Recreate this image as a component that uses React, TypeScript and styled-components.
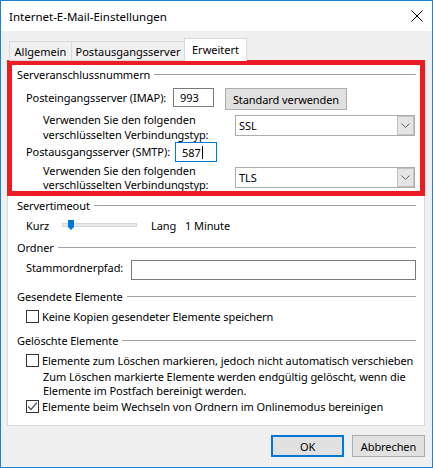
import React from 'react';
import styled, { createGlobalStyle } from 'styled-components';

const FONT = `"Noto Sans", "Open Sans", sans-serif`;

const Global = createGlobalStyle`
  html, body { margin: 0; padding: 0; background: #ffffff; }
  body { font-family: ${FONT}; font-size: 11px; color: #000; }
  * { box-sizing: border-box; }
`;

const Window = styled.div`
  width: 433px;
  height: 468px;
  border: 1px solid #1883d7;
  background: #f0f0f0;
  display: flex;
  flex-direction: column;
  font-family: ${FONT};
  font-size: 11px;
  letter-spacing: -0.08px;
  color: #000;
`;

const TitleBar = styled.div`
  height: 30px;
  background: #ffffff;
  display: flex;
  align-items: center;
  justify-content: space-between;
  padding: 0 9px 0 8px;
  font-size: 11.5px;
  letter-spacing: 0;
`;

const Body = styled.div`
  flex: 1;
  display: flex;
  flex-direction: column;
  padding: 7px 7px 0 6px;
`;

const TabRow = styled.div`
  display: flex;
  align-items: flex-end;
  height: 23px;
  padding-left: 2px;
  margin-bottom: -1px;
  position: relative;
  z-index: 1;
`;

const Tab = styled.div<{ $w: number; $active?: boolean }>`
  width: ${(p) => p.$w}px;
  height: ${(p) => (p.$active ? 23 : 20)}px;
  margin-left: -1px;
  &:first-child { margin-left: 0; }
  border: 1px solid #d9d9d9;
  border-bottom: ${(p) => (p.$active ? 'none' : '1px solid #d9d9d9')};
  background: ${(p) => (p.$active ? '#ffffff' : '#f0f0f0')};
  display: flex;
  align-items: center;
  justify-content: center;
  padding-bottom: ${(p) => (p.$active ? 2 : 0)}px;
  white-space: nowrap;
  letter-spacing: 0;
`;

const Panel = styled.div`
  position: relative;
  background: #ffffff;
  border: 1px solid #d9d9d9;
  display: flex;
  flex-direction: column;
  padding: 5px 8px 11px 9px;
`;

const RedFrame = styled.div`
  position: absolute;
  top: -1px;
  left: -1px;
  width: 418px;
  height: 136px;
  border: 5px solid #ed1c24;
  pointer-events: none;
`;

const GroupHeader = styled.div<{ $mt?: number }>`
  display: flex;
  align-items: center;
  height: 16px;
  margin-top: ${(p) => p.$mt ?? 0}px;
  white-space: nowrap;
  &::after {
    content: '';
    flex: 1;
    height: 0;
    border-top: 1px solid #a0a0a0;
    margin-left: 4px;
  }
`;

const Row = styled.div<{ $mt?: number; $indent?: number }>`
  display: flex;
  align-items: flex-start;
  margin-top: ${(p) => p.$mt ?? 0}px;
  padding-left: ${(p) => p.$indent ?? 9}px;
`;

const Label = styled.div<{ $w?: number; $lh?: number; $ml?: number }>`
  ${(p) => (p.$w ? `width: ${p.$w}px; flex: none;` : '')}
  margin-left: ${(p) => p.$ml ?? 0}px;
  line-height: ${(p) => p.$lh ?? 16}px;
  white-space: nowrap;
`;

const TextBox = styled.div<{ $w?: number; $h: number; $focus?: boolean; $grow?: boolean }>`
  ${(p) => (p.$grow ? 'flex: 1;' : `width: ${p.$w}px;`)}
  height: ${(p) => p.$h}px;
  border: 1px solid ${(p) => (p.$focus ? '#0078d7' : '#7a7a7a')};
  background: #fff;
  display: flex;
  align-items: center;
  padding-left: 6px;
  flex-shrink: 0;
`;

const Caret = styled.span`
  display: inline-block;
  width: 1px;
  height: 13px;
  background: #000;
  margin-left: 1px;
`;

const PushButton = styled.div<{ $w: number; $default?: boolean; $ml?: number }>`
  width: ${(p) => p.$w}px;
  height: 22px;
  margin-left: ${(p) => p.$ml ?? 0}px;
  background: #e1e1e1;
  border: ${(p) => (p.$default ? '2px solid #0078d7' : '1px solid #adadad')};
  display: flex;
  align-items: center;
  justify-content: center;
  flex-shrink: 0;
`;

const Select = styled.div<{ $mt?: number }>`
  width: 180px;
  height: 21px;
  margin-top: ${(p) => p.$mt ?? 0}px;
  border: 1px solid #acacac;
  background: #fff;
  display: flex;
  align-items: stretch;
  flex-shrink: 0;
`;

const SelectValue = styled.div`
  flex: 1;
  display: flex;
  align-items: center;
  padding-left: 3px;
`;

const SelectArrow = styled.div`
  width: 17px;
  background: #e5e5e5;
  border: 1px solid #c2c2c2;
  display: flex;
  align-items: center;
  justify-content: center;
`;

const SliderWrap = styled.div`
  display: flex;
  align-items: center;
  height: 16px;
`;

const Track = styled.div`
  position: relative;
  width: 75px;
  height: 4px;
  background: #e7eaea;
  border: 1px solid #d6d6d6;
  margin-top: -3px;
`;

const Thumb = styled.svg`
  position: absolute;
  left: 5px;
  top: -4px;
`;

const CheckRow = styled.div<{ $mt?: number }>`
  display: flex;
  align-items: center;
  height: 16px;
  margin-top: ${(p) => p.$mt ?? 0}px;
  padding-left: 9px;
  white-space: nowrap;
`;

const Box = styled.div`
  width: 13px;
  height: 13px;
  border: 1px solid #333333;
  background: #fff;
  margin-right: 3px;
  display: flex;
  align-items: center;
  justify-content: center;
  flex-shrink: 0;
`;

const Description = styled.div`
  margin-top: 2px;
  padding-left: 26px;
  line-height: 14px;
`;

const Footer = styled.div`
  display: flex;
  justify-content: flex-end;
  gap: 8px;
  padding-top: 9px;
`;

const Chevron = () => (
  <svg width="9" height="5" viewBox="0 0 9 5">
    <path d="M0.5 0.5 L4.5 4.5 L8.5 0.5" fill="none" stroke="#606060" strokeWidth="1" />
  </svg>
);

const Check = ({ checked }: { checked?: boolean }) => (
  <Box>
    {checked && (
      <svg width="11" height="11" viewBox="0 0 11 11">
        <path d="M1 5.5 L4 8.5 L10 1.5" fill="none" stroke="#555" strokeWidth="1.2" />
      </svg>
    )}
  </Box>
);

const SelectRow = ({ value, mt, lh }: { value: string; mt: number; lh: number }) => (
  <Row $mt={mt} $indent={26}>
    <Label $w={192} $lh={lh}>
      Verwenden Sie den folgenden
      <br />
      verschlüsselten Verbindungstyp:
    </Label>
    <Select $mt={3}>
      <SelectValue>{value}</SelectValue>
      <SelectArrow>
        <Chevron />
      </SelectArrow>
    </Select>
  </Row>
);

export default function App() {
  return (
    <>
      <Global />
      <Window>
        <TitleBar>
          <span>Internet-E-Mail-Einstellungen</span>
          <svg width="12" height="12" viewBox="0 0 12 12">
            <path d="M0.5 0.5 L11.5 11.5 M11.5 0.5 L0.5 11.5" stroke="#000" strokeWidth="1" />
          </svg>
        </TitleBar>
        <Body>
          <TabRow>
            <Tab $w={63}>Allgemein</Tab>
            <Tab $w={114}>Postausgangsserver</Tab>
            <Tab $w={63} $active>
              Erweitert
            </Tab>
          </TabRow>
          <Panel>
            <GroupHeader>Serveranschlussnummern</GroupHeader>
            <Row $mt={6}>
              <Label $w={147} $lh={20}>
                Posteingangsserver (IMAP):
              </Label>
              <TextBox $w={41} $h={19}>
                993
              </TextBox>
              <PushButton $w={122} $ml={11}>
                Standard verwenden
              </PushButton>
            </Row>
            <SelectRow value="SSL" mt={2} lh={15} />
            <Row>
              <Label $w={149} $lh={20}>
                Postausgangsserver (SMTP):
              </Label>
              <TextBox $w={42} $h={20} $focus>
                587
                <Caret />
              </TextBox>
            </Row>
            <SelectRow value="TLS" mt={2} lh={14} />

            <GroupHeader $mt={5}>Servertimeout</GroupHeader>
            <Row $mt={5}>
              <SliderWrap>
                <Label $w={36}>Kurz</Label>
                <Track>
                  <Thumb width="6" height="10" viewBox="0 0 6 10">
                    <path d="M0 0 H6 V7 L3 10 L0 7 Z" fill="#0078d7" />
                  </Thumb>
                </Track>
                <Label $w={34} $ml={14}>
                  Lang
                </Label>
                <Label>1 Minute</Label>
              </SliderWrap>
            </Row>

            <GroupHeader $mt={5}>Ordner</GroupHeader>
            <Row $mt={5}>
              <Label $w={105} $lh={15}>
                Stammordnerpfad:
              </Label>
              <TextBox $grow $h={20} />
            </Row>

            <GroupHeader $mt={8}>Gesendete Elemente</GroupHeader>
            <CheckRow $mt={4}>
              <Check />
              Keine Kopien gesendeter Elemente speichern
            </CheckRow>

            <GroupHeader $mt={8}>Gelöschte Elemente</GroupHeader>
            <CheckRow $mt={4}>
              <Check />
              Elemente zum Löschen markieren, jedoch nicht automatisch verschieben
            </CheckRow>
            <Description>
              Zum Löschen markierte Elemente werden endgültig gelöscht, wenn die
              <br />
              Elemente im Postfach bereinigt werden.
            </Description>
            <CheckRow>
              <Check checked />
              Elemente beim Wechseln von Ordnern im Onlinemodus bereinigen
            </CheckRow>
            <RedFrame />
          </Panel>
          <Footer>
            <PushButton $w={73} $default>
              OK
            </PushButton>
            <PushButton $w={73}>Abbrechen</PushButton>
          </Footer>
        </Body>
      </Window>
    </>
  );
}
